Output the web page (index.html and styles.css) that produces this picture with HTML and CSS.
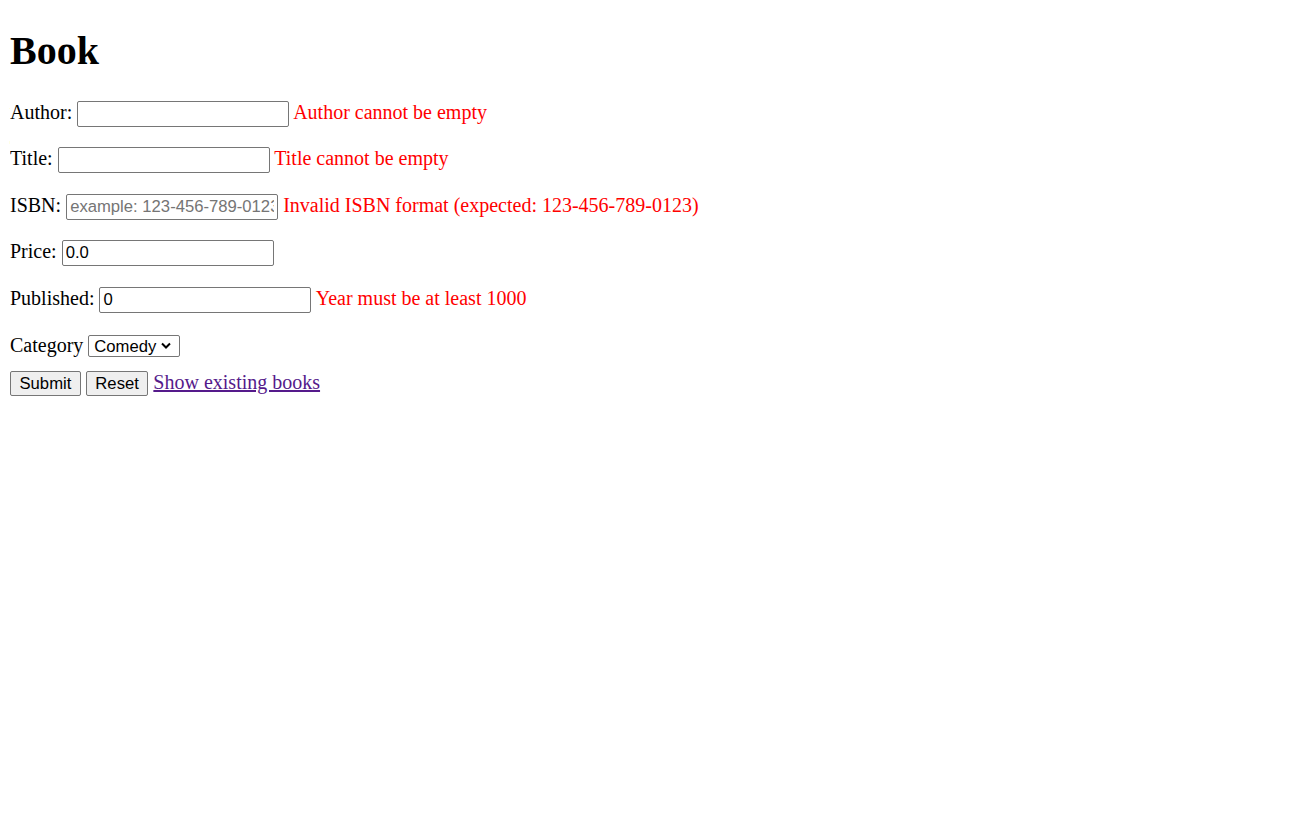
FILE: index.html
```html
<!DOCTYPE html>
<html>
<head>
<meta charset="utf-8">
<title>Book</title>
<link rel="stylesheet" href="styles.css">
</head>
<body class="page">
<h1 class="heading">Book</h1>
<form class="book-form">
<p class="row">Author: <input class="field" type="text"> <span class="error">Author cannot be empty</span></p>
<p class="row">Title: <input class="field" type="text"> <span class="error">Title cannot be empty</span></p>
<p class="row">ISBN: <input class="field" type="text" placeholder="example: 123-456-789-0123"> <span class="error">Invalid ISBN format (expected: 123-456-789-0123)</span></p>
<p class="row">Price: <input class="field" type="text" value="0.0"></p>
<p class="row">Published: <input class="field" type="text" value="0"> <span class="error">Year must be at least 1000</span></p>
<p class="row row-last">Category <span class="select-wrap"><select class="choice"><option>Comedy</option><option>Drama</option></select><svg class="chevron" width="10" height="7" viewBox="0 0 10 7"><path d="M1 1.5 L5 5.5 L9 1.5" fill="none" stroke="#000" stroke-width="2"/></svg></span></p>
<div class="actions"><input class="btn" type="submit" value="Submit"> <input class="btn" type="reset" value="Reset"> <a class="link" href="#">Show existing books</a></div>
</form>
</body>
</html>
```
FILE: styles.css
```css
.page {
  margin: 10px;
  font-family: "Liberation Serif", "Times New Roman", serif;
  font-size: 20px;
  color: #000;
  background: #fff;
}
.heading {
  font-size: 40px;
  font-weight: bold;
  margin: 16.8px 0 26.8px;
}
.row {
  margin: 20.6px 0;
}
.row-last {
  margin-bottom: 13.6px;
}
.field {
  box-sizing: border-box;
  width: 212px;
  height: 26px;
  padding: 1px 3px;
  border: 1px solid #767676;
  border-radius: 2px;
  font-family: "Liberation Sans", Arial, sans-serif;
  font-size: 16.67px;
  color: #000;
  background: #fff;
}
.field::placeholder {
  color: #757575;
}
.select-wrap {
  position: relative;
  display: inline-block;
}
.choice {
  -webkit-appearance: none;
  appearance: none;
  box-sizing: border-box;
  width: 92px;
  height: 22px;
  padding: 0 20px 0 5px;
  border: 1px solid #767676;
  border-radius: 2px;
  font-family: "Liberation Sans", Arial, sans-serif;
  font-size: 16.67px;
  color: #000;
  background: #fff;
}
.chevron {
  position: absolute;
  right: 9px;
  top: 8px;
  pointer-events: none;
}
.btn {
  box-sizing: border-box;
  height: 25px;
  padding: 1px 8.5px;
  border: 1px solid #767676;
  border-radius: 2px;
  background: #efefef;
  font-family: "Liberation Sans", Arial, sans-serif;
  font-size: 16.67px;
  color: #000;
}
.error {
  color: red;
}
.link {
  color: #551a8b;
}
```
